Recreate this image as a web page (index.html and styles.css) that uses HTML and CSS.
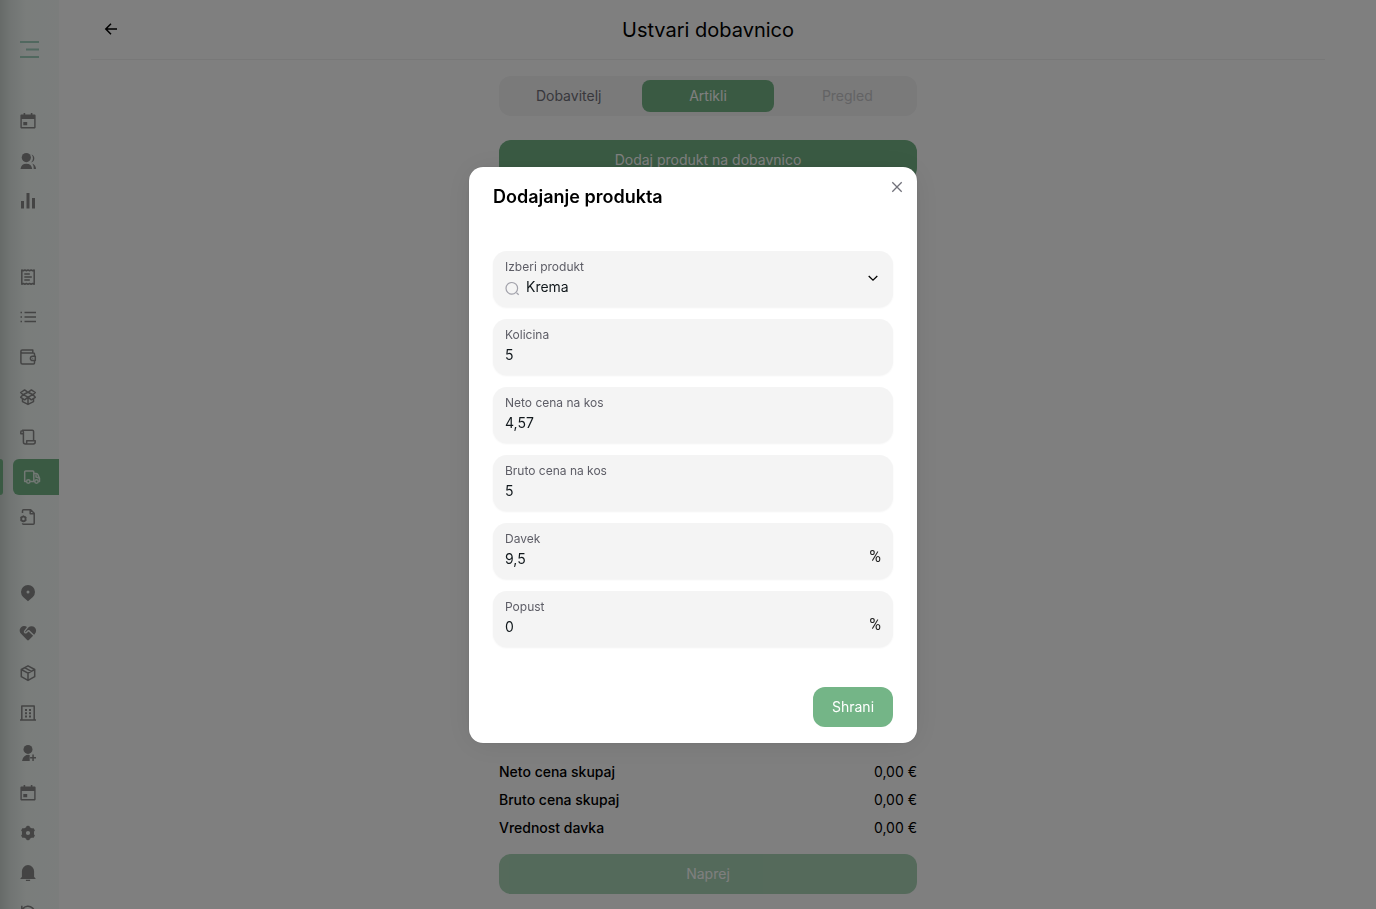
FILE: index.html
```html
<!DOCTYPE html>
<html lang="sl">
<head>
<meta charset="utf-8">
<title>Ustvari dobavnico</title>
<link rel="stylesheet" href="styles.css">
</head>
<body>
<div class="app">
  <aside class="sidebar">
    <button class="menu-toggle" type="button" aria-label="Meni">
      <svg viewBox="0 0 20 18" width="20" height="18" fill="none" stroke="currentColor" stroke-width="2"><path d="M0 1h19M6 8.500h13M0 16h19"/></svg>
    </button>
    <nav class="nav">
      <div class="nav-group">
        <a class="nav-item" href="#" aria-label="Koledar"><svg class="icon solid" viewBox="0 0 16 16"><path fill-rule="evenodd" d="M3.600 0h1.600v1.400h5.600V0h1.600v1.400H14.600a1 1 0 0 1 1 1V14.600a.8.8 0 0 1-.8.8H1.200a.8.8 0 0 1-.8-.8V2.400a1 1 0 0 1 1-1h2.200zM1.800 6v8h12.400V6zM3.300 9h3.900v3.200H3.300z"/></svg></a>
        <a class="nav-item" href="#" aria-label="Stranke"><svg class="icon solid" viewBox="0 0 16 16"><circle cx="6.300" cy="4.600" r="4.600"/><path d="M.5 16a5.900 5.900 0 0 1 11.700 0zM10.900 9.600a5.800 5.800 0 0 0 .7-8.200 4.300 4.300 0 0 1-.7 8.200zM12.300 10.400a6.200 6.200 0 0 1 3.700 5.600h-2.300a7.500 7.500 0 0 0-1.400-5.600z"/></svg></a>
        <a class="nav-item" href="#" aria-label="Statistika"><svg class="icon solid" viewBox="0 0 16 16"><path d="M1 8h3v7.500H1zM6.500 0h3v15.500h-3zM12 5h3v10.500h-3z"/></svg></a>
      </div>
      <div class="nav-group">
        <a class="nav-item" href="#" aria-label="Računi"><svg class="icon" viewBox="0 0 16 16"><path d="M1.800 1l1.500.7L4.900 1l1.500.7L8 1l1.600.7L11.100 1l1.600.7L14.200 1v14.200l-1.500-.7-1.600.7-1.500-.7-1.600.7-1.600-.7-1.500.7-1.600-.7-1.500.7zM4.300 5h5.500M4.300 8h7.500M4.300 11h5.500"/></svg></a>
        <a class="nav-item" href="#" aria-label="Seznam"><svg class="icon" viewBox="0 0 16 16"><path d="M4.500 3.500H16M4.500 8H16M4.500 12.500H16M.5 3.500H2M.5 8H2M.5 12.500H2"/></svg></a>
        <a class="nav-item" href="#" aria-label="Denarnica"><svg class="icon" viewBox="0 0 16 16"><path d="M14.500 7V4.900a1 1 0 0 0-1-1H2.300A1.400 1.400 0 0 1 2.300 1h10.500v2.900M.9 2.500v11a1.500 1.500 0 0 0 1.500 1.500h11.100a1 1 0 0 0 1-1v-2.300M15.300 7.200h-2.700a2.200 2.200 0 0 0 0 4.400h2.700z"/><path d="M12.500 9.400h.6"/></svg></a>
        <a class="nav-item" href="#" aria-label="Zaloga"><svg class="icon" viewBox="0 0 16 16"><path d="M8 3.300L4.600.9.700 3.500 3 5.700 8 3.300l5 2.400 2.300-2.200L11.400.9zM3 5.700L.7 8.300l4 2.500L8 8.200l3.300 2.600 4-2.500L13 5.700M3 5.700l5 2.500 5-2.500M8 8.200v7M2.500 9.600v3L8 15.400l5.500-2.800v-3"/></svg></a>
        <a class="nav-item" href="#" aria-label="Dokumenti"><svg class="icon" viewBox="0 0 16 16"><path d="M3.400 4.800V13a2 2 0 0 0 2 2h8M3.400 4.800H.8V3A1.300 1.300 0 0 1 3.400 3zM2.100 1.200h10.200a1.300 1.300 0 0 1 1.300 1.300v9.300M6.700 11.800h8.500v1.300A1.900 1.900 0 0 1 13.300 15H5.400a1.400 1.400 0 0 0 1.300-1.500z"/></svg></a>
        <a class="nav-item active" href="#" aria-label="Dobavnice" aria-current="page"><svg class="icon" viewBox="0 0 16 16"><path d="M2.500 12.500H.7V3a1 1 0 0 1 1-1h7.100a1 1 0 0 1 1 1v9.500H6.100M9.800 4.500h2.400a2 2 0 0 1 1.800 1.200l1.500 3.500v3.300h-1.200M10.800 12.500h-1M12 5.500V8l3 1"/><circle cx="4.300" cy="12.500" r="1.700"/><circle cx="12.500" cy="12.500" r="1.700"/></svg></a>
        <a class="nav-item" href="#" aria-label="Nastavitve dokumenta"><svg class="icon" viewBox="0 0 16 16"><path d="M2.500 4V1.800a1 1 0 0 1 1-1h7.200L14.200 4.300v10a1 1 0 0 1-1 1H3.500a1 1 0 0 1-1-1M10.200.8v4h4"/><circle cx="3.400" cy="9.900" r="2.200" stroke-width="1.800"/><path d="M3.400 6.600v1M3.400 12.200v1M.5 8.200l.9.500M5.400 11.100l.9.500M.5 11.600l.9-.5M5.400 8.700l.9-.5"/></svg></a>
      </div>
      <div class="nav-group">
        <a class="nav-item" href="#" aria-label="Lokacije"><svg class="icon solid" viewBox="0 0 16 16"><path fill-rule="evenodd" d="M8 16.200L3.100 11.900a7 7 0 1 1 9.800 0zM8 5.500a1.500 1.500 0 1 0 0 3 1.500 1.500 0 0 0 0-3z"/></svg></a>
        <a class="nav-item" href="#" aria-label="Zvestoba"><svg class="icon solid" viewBox="0 0 16 16"><path d="M7 2.100L4.100 5.700a1.800 1.800 0 0 0 2.500 2.500l2-1.700 4.500 4.300L8.900 15a1.300 1.300 0 0 1-1.800 0L1.300 9.100A4.500 4.500 0 0 1 7 2.100z"/><path d="M8.300 2.500a4.500 4.500 0 0 1 6.400 6.600l-.6.600-4.900-4.700H8L5.800 7.100a.4.400 0 0 1-.6-.6z"/></svg></a>
        <a class="nav-item" href="#" aria-label="Produkti"><svg class="icon" viewBox="0 0 16 16"><path d="M8 .8l6.700 3.700v7.200L8 15.400l-6.700-3.700V4.500zM1.300 4.500L8 8.200l6.700-3.700M8 8.200v7.200M4.600 2.700l6.800 3.700"/></svg></a>
        <a class="nav-item" href="#" aria-label="Podjetje"><svg class="icon" viewBox="0 0 16 16"><path d="M1.800 15V1h12.400v14M0 15h16"/><path stroke-width="2" d="M5 5h2M9 5h2M5 8.200h2M9 8.200h2M5 11.400h2M9 11.400h2"/></svg></a>
        <a class="nav-item" href="#" aria-label="Dodaj uporabnika"><svg class="icon solid" viewBox="0 0 16 16"><circle cx="8" cy="4.400" r="4.500"/><path d="M2 16a6.500 6.500 0 0 1 7.700-6v6zM12.300 9.500h1.500V12H16v1.500h-2.200V16h-1.500v-2.500h-2.200V12h2.200z"/></svg></a>
        <a class="nav-item" href="#" aria-label="Urnik"><svg class="icon solid" viewBox="0 0 16 16"><path fill-rule="evenodd" d="M3.600 0h1.600v1.400h5.600V0h1.600v1.400H14.600a1 1 0 0 1 1 1V14.600a.8.8 0 0 1-.8.8H1.200a.8.8 0 0 1-.8-.8V2.400a1 1 0 0 1 1-1h2.200zM1.800 6v8h12.400V6zM3.300 9h3.900v3.200H3.300z"/></svg></a>
        <a class="nav-item" href="#" aria-label="Nastavitve"><svg class="icon solid" viewBox="0 0 16 16"><circle cx="8" cy="8" r="4.100" fill="none" stroke="currentColor" stroke-width="4"/><path d="M6 3.500L6.500.9a8 8 0 0 1 3 0l.5 2.600zM6 12.500l.5 2.600a8 8 0 0 0 3 0l.5-2.600zM10.800 4l2.500-.9a7.500 7.500 0 0 1 1.600 2.700l-2 1.700zM12.900 8.500l2 1.700a7.500 7.500 0 0 1-1.600 2.700l-2.500-.9zM5.200 4l-2.500-.9a7.500 7.500 0 0 0-1.600 2.700l2 1.700zM3.100 8.500l-2 1.700a7.500 7.500 0 0 0 1.600 2.700l2.500-.9z"/></svg></a>
        <a class="nav-item" href="#" aria-label="Obvestila"><svg class="icon solid" viewBox="0 0 16 16"><path d="M1.900 12V6.200a6.100 6.100 0 0 1 12.200 0V12l1.400 1.300V14H.5v-.7zM5.900 14.800h4.200V16H5.900z"/></svg></a>
        <a class="nav-item" href="#" aria-label="Pomoč"><svg class="icon" viewBox="0 0 16 16"><path d="M2.500 4A6.700 6.700 0 1 1 2 11M1.800.8V4.500h3.500"/></svg></a>
      </div>
    </nav>
  </aside>

  <main class="main">
    <header class="page-header">
      <button class="back" type="button" aria-label="Nazaj">
        <svg viewBox="0 0 16 16" width="16" height="16" fill="none" stroke="currentColor" stroke-width="1.500"><path d="M14 7H3M8 1.800L2.800 7 8 12.200"/></svg>
      </button>
      <h1 class="page-title">Ustvari dobavnico</h1>
    </header>
    <section class="column">
      <div class="tabs" role="tablist">
        <button class="tab" type="button" role="tab">Dobavitelj</button>
        <button class="tab selected" type="button" role="tab" aria-selected="true">Artikli</button>
        <button class="tab" type="button" role="tab" disabled>Pregled</button>
      </div>
      <button class="button" type="button">Dodaj produkt na dobavnico</button>
      <div class="summary">
        <dl class="totals">
          <div class="total"><dt>Neto cena skupaj</dt><dd>0,00 €</dd></div>
          <div class="total"><dt>Bruto cena skupaj</dt><dd>0,00 €</dd></div>
          <div class="total"><dt>Vrednost davka</dt><dd>0,00 €</dd></div>
        </dl>
        <button class="button" type="button" disabled>Naprej</button>
      </div>
    </section>
  </main>
</div>

<div class="overlay">
  <form class="modal" role="dialog" aria-modal="true" aria-labelledby="modal-title">
    <h2 class="modal-title" id="modal-title">Dodajanje produkta</h2>
    <button class="close" type="button" aria-label="Zapri">
      <svg viewBox="0 0 16 16" width="16" height="16" fill="none" stroke="currentColor" stroke-width="1.300"><path d="M3.300 3.300l9.400 9.400M12.700 3.300l-9.400 9.400"/></svg>
    </button>
    <div class="fields">
      <div class="field">
        <label for="product">Izberi produkt</label>
        <div class="search">
          <svg viewBox="0 0 15 16" width="15" height="16" fill="none" stroke="currentColor" stroke-width="1.200"><circle cx="6.800" cy="9.300" r="5.800"/><path d="M11.500 13.800l2.200 2"/></svg>
          <input id="product" type="text" role="combobox" aria-expanded="false" value="Krema">
        </div>
        <button class="expand" type="button" aria-label="Odpri seznam">
          <svg viewBox="0 0 16 16" width="16" height="16" fill="none" stroke="currentColor" stroke-width="1.300"><path d="M3.700 5L8 9.100 12.300 5"/></svg>
        </button>
      </div>
      <div class="field"><label for="quantity">Kolicina</label><input id="quantity" type="text" value="5"></div>
      <div class="field"><label for="net">Neto cena na kos</label><input id="net" type="text" value="4,57"></div>
      <div class="field"><label for="gross">Bruto cena na kos</label><input id="gross" type="text" value="5"></div>
      <div class="field"><label for="tax">Davek</label><input id="tax" type="text" value="9,5"><span class="suffix">%</span></div>
      <div class="field"><label for="discount">Popust</label><input id="discount" type="text" value="0"><span class="suffix">%</span></div>
    </div>
    <div class="actions"><button class="button save" type="button">Shrani</button></div>
  </form>
</div>
</body>
</html>
```
FILE: styles.css
```css
* { box-sizing: border-box; }

body {
  margin: 0;
  overflow: hidden;
  font-family: Inter, "Noto Sans", sans-serif;
  font-size: 14px;
  line-height: 20px;
  color: #000;
  background: #fff;
}

button, input { font: inherit; color: inherit; }
button { padding: 0; border: 0; background: none; }
h1, h2, dl, dd { margin: 0; }
svg { display: block; }

.app { display: flex; height: 100vh; overflow: hidden; }

.sidebar {
  flex: none;
  width: 59px;
  overflow: hidden;
  background: linear-gradient(90deg, #ced6d2 0, #e2e9e6 10px, #f4faf7 26px, #f6fbf9 100%);
}
.menu-toggle { display: block; margin: 41px 0 44px 20px; color: #a2d0bf; }
.nav { display: flex; flex-direction: column; gap: 40px; }
.nav-group { display: flex; flex-direction: column; gap: 4px; }
.nav-item {
  display: flex;
  align-items: center;
  height: 36px;
  padding-left: 20px;
  color: #888;
}
.nav-item.active {
  position: relative;
  margin-left: 13px;
  padding-left: 11px;
  border-radius: 6px 0 0 6px;
  color: #e4f0e8;
  background: #74b587;
}
.nav-item.active::before {
  content: "";
  position: absolute;
  top: 0;
  left: -13px;
  width: 3px;
  height: 36px;
  border-radius: 0 3px 3px 0;
  background: #74b587;
}
.icon { width: 16px; height: 16px; overflow: visible; fill: none; stroke: currentColor; stroke-width: 1.5; stroke-linejoin: round; }
.icon.solid { fill: currentColor; stroke: none; }

.main {
  flex: 1;
  display: flex;
  flex-direction: column;
  padding: 0 51px 15px 32px;
}
.page-header {
  display: grid;
  grid-template-columns: 40px 1fr 40px;
  align-items: center;
  height: 60px;
  border-bottom: 1px solid #f0f0f0;
}
.back { justify-self: center; }
.page-title { font-size: 20px; line-height: 28px; font-weight: 400; text-align: center; }

.column {
  flex: 1;
  display: flex;
  flex-direction: column;
  width: 100%;
  max-width: 418px;
  margin: 16px auto 0;
}
.tabs {
  display: grid;
  grid-template-columns: repeat(3, 1fr);
  gap: 8px;
  margin-bottom: 24px;
  padding: 4px;
  border-radius: 12px;
  background: #f4f4f5;
}
.tab { height: 32px; border-radius: 8px; color: #71717a; }
.tab.selected { color: #fff; background: #74b587; }
.tab:disabled { color: #c6c6c9; }

.button { height: 40px; border-radius: 12px; color: #fff; background: #74b587; }
.button:disabled { opacity: 0.7; background: #86c399; }

.summary { display: flex; flex-direction: column; gap: 16px; margin-top: auto; }
.totals { display: flex; flex-direction: column; gap: 8px; }
.total { display: flex; justify-content: space-between; }
.total dt { font-weight: 500; }

.overlay {
  position: fixed;
  inset: 0;
  display: flex;
  align-items: center;
  justify-content: center;
  padding-left: 10px;
  background: rgba(0, 0, 0, 0.5);
}
.modal {
  position: relative;
  width: 448px;
  border-radius: 14px;
  background: #fff;
  box-shadow: 0 0 15px rgba(0, 0, 0, 0.03), 0 2px 30px rgba(0, 0, 0, 0.08), 0 0 1px rgba(0, 0, 0, 0.3);
}
.modal-title { padding: 16px 24px; font-size: 18px; line-height: 28px; font-weight: 600; }
.close { position: absolute; top: 4px; right: 4px; padding: 8px; color: #71717a; }
.fields { display: flex; flex-direction: column; gap: 12px; padding: 24px; }
.field {
  display: grid;
  grid-template-columns: 1fr auto;
  grid-template-rows: 16px 24px;
  padding: 8px 12px;
  border-radius: 14px;
  background: #f4f4f4;
  box-shadow: 0 1px 2px rgba(0, 0, 0, 0.05);
}
.field label { font-size: 12px; line-height: 16px; color: #5d5d66; }
.field input {
  grid-column: 1;
  min-width: 0;
  width: 100%;
  height: 24px;
  padding: 0;
  border: 0;
  outline: 0;
  color: #11181c;
  background: none;
}
.search { display: flex; align-items: center; gap: 6px; grid-column: 1; }
.search svg { flex: none; overflow: visible; color: #a1a1aa; }
.expand { grid-column: 2; grid-row: 1 / 3; }
.suffix { grid-column: 2; grid-row: 2; font-family: Roboto, sans-serif; font-size: 16px; line-height: 20px; color: #222; }
.actions { display: flex; justify-content: flex-end; padding: 16px 24px; }
.save { width: 80px; }
```
